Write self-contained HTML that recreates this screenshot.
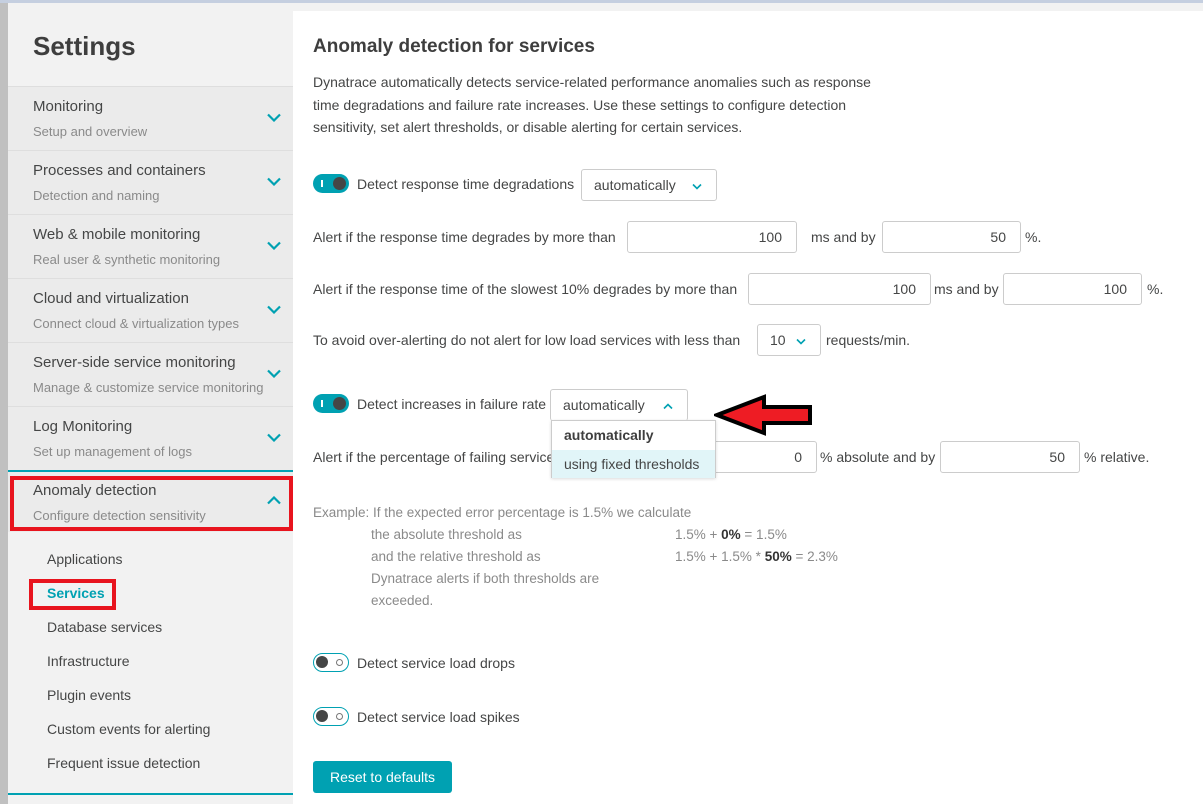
<!DOCTYPE html>
<html><head><meta charset="utf-8"><style>
*{margin:0;padding:0;box-sizing:border-box}
body{width:1203px;height:804px;position:relative;overflow:hidden;background:#f2f2f2;font-family:"Liberation Sans",sans-serif;color:#454646;font-size:14px}
.a{position:absolute;white-space:nowrap}
.sec{position:absolute;left:8px;width:285px;height:64px;background:#ebebeb;border-top:1px solid #dedede}
.sec .t{position:absolute;left:25px;top:11px;font-size:15px;color:#454646}
.sec .s{position:absolute;left:25px;top:37px;font-size:13px;color:#8a8a8a}
.chev{position:absolute;left:259px;top:26px;width:14px;height:9px}
.inp{position:absolute;height:32px;border:1px solid #ccc;border-radius:3px;background:#fff;text-align:right;padding-right:14px;line-height:30px}
.sel{position:absolute;height:32px;border:1px solid #ccc;border-radius:3px;background:#fff;line-height:30px;padding-left:12px}
.tg{position:absolute;width:36px;height:19px;border-radius:10px}
.on{background:#00a1b2}
.on::before{content:"";position:absolute;left:8px;top:6px;width:1.5px;height:7px;background:#fff}
.on::after{content:"";position:absolute;right:3px;top:3px;width:13px;height:13px;border-radius:50%;background:#454646}
.off{border:1.5px solid #00a1b2;background:#fff}
.off::before{content:"";position:absolute;left:2px;top:2px;width:12px;height:12px;border-radius:50%;background:#454646}
.off::after{content:"";position:absolute;right:5px;top:4.5px;width:7px;height:7px;border-radius:50%;border:1.5px solid #777;box-sizing:border-box}
.sub{position:absolute;left:47px;font-size:14px}
.ex{color:#8a8a8a;font-size:13.5px}
</style></head><body>
<div class="a" style="left:0;top:0;width:1203px;height:3px;background:#c5cfe0"></div>
<div class="a" style="left:0;top:3px;width:8px;height:801px;background:#c0c0c0"></div>
<div class="a" style="left:293px;top:11px;width:910px;height:793px;background:#fff"></div>
<div class="a" style="left:33px;top:31px;font-size:26px;font-weight:bold;color:#3e3e3e">Settings</div>

<div class="sec" style="top:86px"><div class="t">Monitoring</div><div class="s">Setup and overview</div><svg class="chev" viewBox="0 0 14 9"><path d="M1 1.5L7 7.5L13 1.5" fill="none" stroke="#00a1b2" stroke-width="2.2"/></svg></div>
<div class="sec" style="top:150px"><div class="t">Processes and containers</div><div class="s">Detection and naming</div><svg class="chev" viewBox="0 0 14 9"><path d="M1 1.5L7 7.5L13 1.5" fill="none" stroke="#00a1b2" stroke-width="2.2"/></svg></div>
<div class="sec" style="top:214px"><div class="t">Web &amp; mobile monitoring</div><div class="s">Real user &amp; synthetic monitoring</div><svg class="chev" viewBox="0 0 14 9"><path d="M1 1.5L7 7.5L13 1.5" fill="none" stroke="#00a1b2" stroke-width="2.2"/></svg></div>
<div class="sec" style="top:278px"><div class="t">Cloud and virtualization</div><div class="s">Connect cloud &amp; virtualization types</div><svg class="chev" viewBox="0 0 14 9"><path d="M1 1.5L7 7.5L13 1.5" fill="none" stroke="#00a1b2" stroke-width="2.2"/></svg></div>
<div class="sec" style="top:342px"><div class="t">Server-side service monitoring</div><div class="s">Manage &amp; customize service monitoring</div><svg class="chev" viewBox="0 0 14 9"><path d="M1 1.5L7 7.5L13 1.5" fill="none" stroke="#00a1b2" stroke-width="2.2"/></svg></div>
<div class="sec" style="top:406px;height:64px"><div class="t">Log Monitoring</div><div class="s">Set up management of logs</div><svg class="chev" viewBox="0 0 14 9"><path d="M1 1.5L7 7.5L13 1.5" fill="none" stroke="#00a1b2" stroke-width="2.2"/></svg></div>
<div class="a" style="left:8px;top:470px;width:285px;height:2px;background:#00a1b2"></div>
<div class="sec" style="top:472px;height:60px;border:none"><div class="t" style="top:10px">Anomaly detection</div><div class="s" style="top:36px">Configure detection sensitivity</div><svg class="chev" viewBox="0 0 14 9" style="top:24px"><path d="M1 7.5L7 1.5L13 7.5" fill="none" stroke="#00a1b2" stroke-width="2.2"/></svg></div>
<div class="a" style="left:10px;top:476px;width:283px;height:55px;border:4px solid #e8141e"></div>
<div class="sub" style="top:551px">Applications</div>
<div class="sub" style="top:585px;color:#00a1b2;font-weight:bold">Services</div>
<div class="a" style="left:29px;top:579px;width:87px;height:31px;border:4px solid #e8141e"></div>
<div class="sub" style="top:619px">Database services</div>
<div class="sub" style="top:653px">Infrastructure</div>
<div class="sub" style="top:687px">Plugin events</div>
<div class="sub" style="top:721px">Custom events for alerting</div>
<div class="sub" style="top:755px">Frequent issue detection</div>
<div class="a" style="left:8px;top:793px;width:285px;height:2px;background:#00a1b2"></div>

<div class="a" style="left:313px;top:36px;font-size:19px;font-weight:bold;color:#3e3e3e">Anomaly detection for services</div>
<div class="a" style="left:313px;top:71px;line-height:22.5px;white-space:normal;width:600px">Dynatrace automatically detects service-related performance anomalies such as response<br>time degradations and failure rate increases. Use these settings to configure detection<br>sensitivity, set alert thresholds, or disable alerting for certain services.</div>

<div class="tg on" style="left:313px;top:174px"></div>
<div class="a" style="left:357px;top:176px">Detect response time degradations</div>
<div class="sel" style="left:581px;top:169px;width:136px">automatically<svg class="a" style="left:110px;top:13px" width="10" height="7" viewBox="0 0 10 7"><path d="M1 1.5L5 5.5L9 1.5" fill="none" stroke="#00a1b2" stroke-width="1.6"/></svg></div>

<div class="a" style="left:313px;top:229px">Alert if the response time degrades by more than</div>
<div class="inp" style="left:627px;top:221px;width:170px">100</div>
<div class="a" style="left:811px;top:229px">ms and by</div>
<div class="inp" style="left:882px;top:221px;width:139px">50</div>
<div class="a" style="left:1025px;top:229px">%.</div>

<div class="a" style="left:313px;top:281px">Alert if the response time of the slowest 10% degrades by more than</div>
<div class="inp" style="left:748px;top:273px;width:183px">100</div>
<div class="a" style="left:934px;top:281px">ms and by</div>
<div class="inp" style="left:1003px;top:273px;width:139px">100</div>
<div class="a" style="left:1147px;top:281px">%.</div>

<div class="a" style="left:313px;top:332px">To avoid over-alerting do not alert for low load services with less than</div>
<div class="sel" style="left:757px;top:324px;width:64px">10<svg class="a" style="left:38px;top:13px" width="10" height="7" viewBox="0 0 10 7"><path d="M1 1.5L5 5.5L9 1.5" fill="none" stroke="#00a1b2" stroke-width="1.6"/></svg></div>
<div class="a" style="left:826px;top:332px">requests/min.</div>

<div class="tg on" style="left:313px;top:394px"></div>
<div class="a" style="left:357px;top:396px">Detect increases in failure rate</div>

<div class="a" style="left:313px;top:449px">Alert if the percentage of failing services</div>
<div class="inp" style="left:690px;top:441px;width:127px">0</div>
<div class="a" style="left:820px;top:449px">% absolute and by</div>
<div class="inp" style="left:940px;top:441px;width:140px">50</div>
<div class="a" style="left:1084px;top:449px">% relative.</div>

<div class="sel" style="left:550px;top:389px;width:138px;height:32px;border-bottom:none">automatically<svg class="a" style="left:112px;top:13px" width="10" height="7" viewBox="0 0 10 7"><path d="M1 5.5L5 1.5L9 5.5" fill="none" stroke="#00a1b2" stroke-width="1.6"/></svg></div>
<div class="a" style="left:551px;top:420px;width:165px;height:58px;background:#fff;border:1px solid #ccc;box-shadow:0 1px 3px rgba(0,0,0,.15)">
<div class="a" style="left:12px;top:6px;font-weight:bold;color:#3e3e3e">automatically</div>
<div class="a" style="left:0;top:29px;width:163px;height:28px;background:#e1f5f8"></div>
<div class="a" style="left:12px;top:35px">using fixed thresholds</div>
</div>
<svg class="a" style="left:714px;top:394px" width="100" height="42" viewBox="0 0 100 42"><path d="M3 21L50 3V13H96V29H50V39Z" fill="#ee1c24" stroke="#000" stroke-width="4" stroke-linejoin="miter"/></svg>

<div class="a ex" style="left:313px;top:505px">Example: If the expected error percentage is 1.5% we calculate</div>
<div class="a ex" style="left:371px;top:527px">the absolute threshold as</div>
<div class="a ex" style="left:371px;top:549px">and the relative threshold as</div>
<div class="a ex" style="left:371px;top:571px">Dynatrace alerts if both thresholds are</div>
<div class="a ex" style="left:371px;top:593px">exceeded.</div>
<div class="a ex" style="left:675px;top:527px">1.5% + <b style="color:#333">0%</b> = 1.5%</div>
<div class="a ex" style="left:675px;top:549px">1.5% + 1.5% * <b style="color:#333">50%</b> = 2.3%</div>

<div class="tg off" style="left:313px;top:653px"></div>
<div class="a" style="left:357px;top:655px">Detect service load drops</div>
<div class="tg off" style="left:313px;top:707px"></div>
<div class="a" style="left:357px;top:709px">Detect service load spikes</div>

<div class="a" style="left:313px;top:761px;width:139px;height:32px;background:#00a1b2;border-radius:3px;color:#fff;text-align:center;line-height:32px">Reset to defaults</div>
</body></html>
